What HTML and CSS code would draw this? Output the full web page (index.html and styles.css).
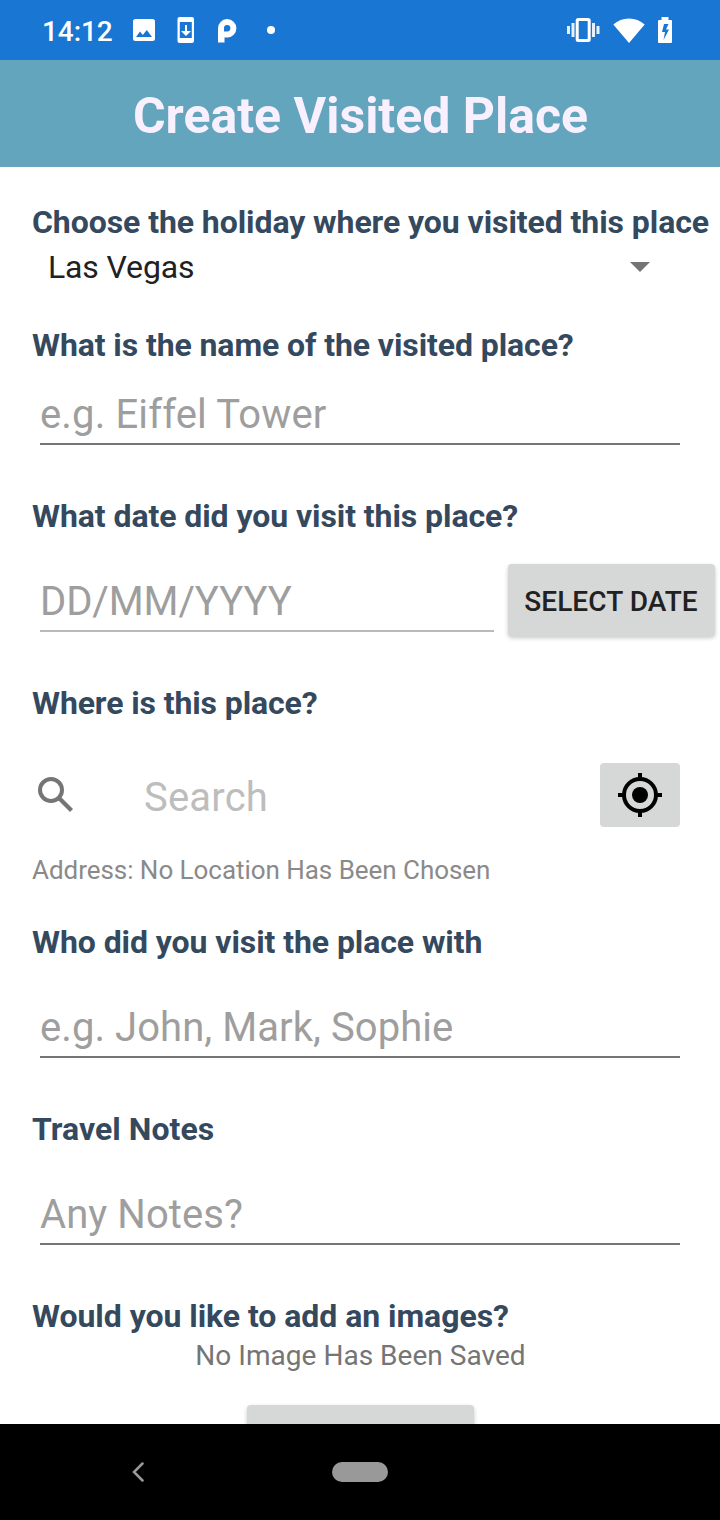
FILE: index.html
```html
<!DOCTYPE html>
<html lang="en">
<head>
<meta charset="utf-8">
<title>Create Visited Place</title>
<link rel="stylesheet" href="styles.css">
</head>
<body>
<div class="screen">
  <div class="status">
    <div class="status-left">
      <span class="clock">14:12</span>
      <svg class="i-image" width="22" height="22" viewBox="0 0 22 22"><path fill="#fff" fill-rule="evenodd" d="M2.500 0h17a2.500 2.500 0 0 1 2.500 2.500v17a2.500 2.500 0 0 1-2.500 2.500h-17a2.500 2.500 0 0 1-2.500-2.500v-17a2.500 2.500 0 0 1 2.500-2.500zM3 18h16l-5.200-7-4 5-2.800-3.400z"/></svg>
      <svg class="i-update" width="17" height="26" viewBox="0 0 17 26"><path fill="#fff" fill-rule="evenodd" d="M2.500 0h12.500a2 2 0 0 1 2 2v22a2 2 0 0 1-2 2H2.500a2 2 0 0 1-2-2V2a2 2 0 0 1 2-2zM2.800 5v16h12V5zM8 8h2v6h4L9 19l-5-5h4z"/></svg>
      <svg class="i-p" width="19" height="24" viewBox="0 0 19 24"><path fill="#fff" fill-rule="evenodd" d="M0 23.500V9.500A9.200 9.200 0 1 1 9.300 18.500H6.500v5zM6 12.500h3.300a3.200 3.200 0 1 0-3.300-3.200z"/></svg>
      <span class="dot"></span>
    </div>
    <div class="status-right">
      <svg width="34" height="24" viewBox="0 0 34 24"><path fill="#fff" d="M0 8h3v8H0zM4.500 5h3v14h-3zM25 5h3v14h-3zM29.500 8h3v8h-3z" opacity=".9"/><rect x="10.200" y="1.500" width="12" height="21" rx="1" fill="none" stroke="#fff" stroke-width="3"/></svg>
      <svg class="i-wifi" width="32" height="25" viewBox="0 0 32 25"><path fill="#fff" d="M16 25 .3 6.500Q7 .5 16 .5t15.700 6z"/></svg>
      <svg class="i-battery" width="14" height="26" viewBox="0 0 14 26"><path fill="#fff" fill-rule="evenodd" d="M3.500 0h7v3H13a1 1 0 0 1 1 1v21a1 1 0 0 1-1 1H1a1 1 0 0 1-1-1V4a1 1 0 0 1 1-1h2.500zM6 7 4 15h3l-1.500 8L11 12.500H8L10.500 7z"/></svg>
    </div>
  </div>
  <header class="title">Create Visited Place</header>
  <main class="form">
    <section class="field">
      <div class="label">Choose the holiday where you visited this place</div>
      <div class="spinner"><span>Las Vegas</span><svg width="20" height="10" viewBox="0 0 20 10"><path fill="#757575" d="M0 0h20L10 10z"/></svg></div>
    </section>
    <section class="field f-name">
      <div class="label">What is the name of the visited place?</div>
      <div class="input">e.g. Eiffel Tower</div>
    </section>
    <section class="field">
      <div class="label">What date did you visit this place?</div>
      <div class="date-row"><div class="input disabled">DD/MM/YYYY</div><div class="button">SELECT DATE</div></div>
    </section>
    <section class="field f-where">
      <div class="label">Where is this place?</div>
      <div class="search-row">
        <svg width="36" height="36" viewBox="0 0 36 36"><g fill="none" stroke="#757575"><circle cx="13" cy="13" r="11" stroke-width="4"/><path d="m21.500 21.500 12 12" stroke-width="4.200"/></g></svg>
        <span class="search">Search</span>
        <div class="locate"><svg width="44" height="44" viewBox="0 0 44 44"><circle cx="22" cy="22" r="8"/><circle cx="22" cy="22" r="16" fill="none" stroke="#000" stroke-width="4"/><path d="M20 0h4v6h-4zM20 38h4v6h-4zM0 20h6v4H0zM38 20h6v4h-6z"/></svg></div>
      </div>
      <div class="address">Address: No Location Has Been Chosen</div>
    </section>
    <section class="field f-who">
      <div class="label">Who did you visit the place with</div>
      <div class="input">e.g. John, Mark, Sophie</div>
    </section>
    <section class="field f-notes">
      <div class="label">Travel Notes</div>
      <div class="input">Any Notes?</div>
    </section>
    <section class="field f-images">
      <div class="label">Would you like to add an images?</div>
      <div class="no-image">No Image Has Been Saved</div>
      <div class="button add-image"></div>
    </section>
  </main>
  <nav class="nav">
    <svg width="14" height="20" viewBox="0 0 14 20"><path d="M11.500 1.500 3 10l8.500 8.500" fill="none" stroke="#999" stroke-width="2.500" stroke-linecap="round"/></svg>
    <span class="pill"></span>
  </nav>
</div>
</body>
</html>
```
FILE: styles.css
```css
* { box-sizing: border-box; }
body { margin: 0; font-family: Roboto, sans-serif; background: #fff; }
svg { display: block; flex: none; }
.screen { width: 720px; height: 1520px; display: flex; flex-direction: column; overflow: hidden; }
.status { flex: none; height: 60px; background: #1976d2; display: flex; justify-content: space-between; padding: 0 48px 0 42px; }
.status-left, .status-right { display: flex; align-items: center; }
.clock { width: 91px; font-size: 28px; font-weight: 500; line-height: 33px; color: #fff; margin-top: 2px; letter-spacing: -.1px; }
.i-update { margin-left: 22px; }
.i-p { margin-left: 24px; margin-top: 1px; }
.dot { width: 8px; height: 8px; border-radius: 50%; background: #fff; margin-left: 30px; }
.i-wifi { margin-left: 12px; }
.i-battery { margin-left: 13px; }
.title { flex: none; height: 107px; background: #64a5be; color: #f8f0ff; font-size: 50px; font-weight: 700; line-height: 59px; padding: 27px 0 0 1px; text-align: center; }
.form { flex: 1; min-height: 0; overflow: hidden; padding: 36px 0 0 32px; }
.field { margin-bottom: 52px; }
.label { font-size: 32px; font-weight: 700; line-height: 38px; color: #34495e; white-space: nowrap; letter-spacing: -.075px; }
.f-name .label { letter-spacing: -.095px; }
.f-where .label { letter-spacing: -.11px; }
.f-notes .label { letter-spacing: .04px; }
.f-images .label { letter-spacing: -.05px; }
.spinner { display: flex; justify-content: space-between; align-items: center; margin: 7px 70px -12px 16px; font-size: 32px; line-height: 38px; color: #212121; letter-spacing: -.14px; }
.input { margin: 43px 40px 0 8px; height: 54px; font-size: 40px; line-height: 47px; color: #9e9e9e; border-bottom: 2px solid #757575; letter-spacing: .07px; }
.f-name .input { margin-top: 27px; letter-spacing: .14px; }
.date-row { display: flex; align-items: flex-end; margin: 29px 5px -4px 8px; }
.date-row .input { flex: 1; margin: 0 14px 4px 0; letter-spacing: -.08px; }
.date-row .disabled { border-bottom-color: #bababa; }
.button { width: 207px; height: 72px; border-radius: 4px; background: #d6d7d7; box-shadow: 0 2px 4px rgba(0, 0, 0, .22); color: #212121; font-size: 28px; font-weight: 500; line-height: 75px; text-align: center; white-space: nowrap; letter-spacing: .08px; padding-right: 1px; }
.f-where { margin-bottom: 38px; }
.search-row { display: flex; align-items: center; height: 64px; margin: 41px 40px 28px 6px; }
.search { flex: 1; margin: 5px 0 0 70px; font-size: 40px; line-height: 47px; color: #bdbdbd; letter-spacing: .2px; }
.locate { width: 80px; height: 64px; border-radius: 4px; background: #d6d7d7; display: flex; align-items: center; justify-content: center; }
.address { font-size: 26px; line-height: 30px; color: #8a8a8a; letter-spacing: -.04px; }
.no-image { margin: 4px 31px 33px 0; font-size: 28px; line-height: 33px; color: #757575; text-align: center; letter-spacing: .03px; }
.add-image { width: 227px; margin-left: 215px; }
.nav { flex: none; height: 96px; background: #000; display: flex; align-items: center; padding-left: 131px; }
.pill { width: 56px; height: 20px; border-radius: 10px; background: #999; margin-left: 187px; }
```
